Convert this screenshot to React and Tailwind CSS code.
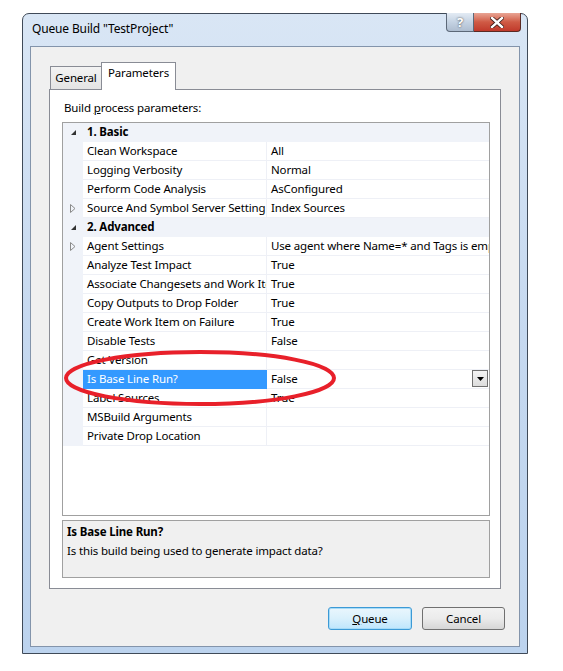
import React from 'react';

const rows = [
  { cat: true, name: '1. Basic' },
  { name: 'Clean Workspace', value: 'All' },
  { name: 'Logging Verbosity', value: 'Normal' },
  { name: 'Perform Code Analysis', value: 'AsConfigured' },
  { name: 'Source And Symbol Server Setting', value: 'Index Sources', collapsed: true },
  { cat: true, name: '2. Advanced' },
  { name: 'Agent Settings', value: 'Use agent where Name=* and Tags is empty; Max Wait Time: 04:00:00', collapsed: true },
  { name: 'Analyze Test Impact', value: 'True' },
  { name: 'Associate Changesets and Work Items', value: 'True' },
  { name: 'Copy Outputs to Drop Folder', value: 'True' },
  { name: 'Create Work Item on Failure', value: 'True' },
  { name: 'Disable Tests', value: 'False' },
  { name: 'Get Version', value: '' },
  { name: 'Is Base Line Run?', value: 'False', selected: true },
  { name: 'Label Sources', value: 'True' },
  { name: 'MSBuild Arguments', value: '' },
  { name: 'Private Drop Location', value: '' },
];

function ExpandedArrow() {
  return (
    <svg width="7" height="7" viewBox="0 0 7 7">
      <path d="M6 1 L6 6 L1 6 Z" fill="#333" />
    </svg>
  );
}

function CollapsedArrow() {
  return (
    <svg width="6" height="9" viewBox="0 0 6 9">
      <path d="M0.5 0.5 L5 4.5 L0.5 8.5 Z" fill="none" stroke="#8a8a8a" strokeWidth="1" />
    </svg>
  );
}

function GridRow({ row }) {
  if (row.cat) {
    return (
      <div className="flex h-[19px] bg-[#f0f3f9] border-b border-[#f0f3f9]">
        <div className="w-[20px] flex items-center justify-center pl-[1px]">
          <ExpandedArrow />
        </div>
        <div className="pl-[4px] font-bold leading-[18px] text-black">{row.name}</div>
      </div>
    );
  }
  return (
    <div className="flex h-[19px]">
      <div className="w-[20px] shrink-0 bg-[#f0f3f9] flex items-center justify-center">
        {row.collapsed && <CollapsedArrow />}
      </div>
      <div
        className={
          row.selected
            ? 'w-[184px] shrink-0 bg-[#3399ff] text-white pl-[4px] leading-[18px] whitespace-nowrap overflow-hidden border-b border-[#3399ff]'
            : 'w-[184px] shrink-0 pl-[4px] leading-[18px] whitespace-nowrap overflow-hidden border-b border-r border-[#eef0f6]'
        }
      >
        {row.name}
      </div>
      <div className="flex-1 min-w-0 flex border-b border-[#eef0f6]">
        <div className="flex-1 min-w-0 pl-[4px] leading-[18px] whitespace-nowrap overflow-hidden">{row.value}</div>
        {row.selected && (
          <div className="w-[16px] h-[17px] mr-[1px] border border-[#707070] bg-gradient-to-b from-[#f4f4f4] to-[#dcdcdc] flex items-center justify-center">
            <svg width="7" height="4" viewBox="0 0 7 4">
              <path d="M0 0 L7 0 L3.5 4 Z" fill="#000" />
            </svg>
          </div>
        )}
      </div>
    </div>
  );
}

export default function App() {
  return (
    <div className="relative w-[563px] h-[671px] bg-white pl-[22px] pt-[13px] font-['Segoe_UI','Noto_Sans',sans-serif] text-[11.5px] tracking-[-0.15px] text-black">
      {/* Window frame */}
      <div className="relative w-[506px] h-[641px] rounded-t-[7px] border border-[#3f4a58] bg-gradient-to-b from-[#d9e6f5] via-[#c6d9f0] to-[#bcd3ee] flex flex-col px-[7px] pb-[6px]">
        {/* Title bar */}
        <div className="h-[32px] flex items-center pl-[2px] pb-[2px] text-[12px] text-black">
          Queue Build "TestProject"
        </div>
        {/* caption buttons */}
        <div className="absolute right-[6px] top-[-1px] flex">
          <div className="w-[28px] h-[19px] rounded-bl-[4px] border border-[#5c6878] border-t-0 bg-gradient-to-b from-[#e3ebf4] via-[#c5d3e3] to-[#aebdd0] flex items-center justify-center text-white font-bold text-[13px] leading-none [text-shadow:0_0_2px_#333]">
            ?
          </div>
          <div className="w-[47px] h-[19px] rounded-br-[4px] border border-[#5a2a24] border-t-0 border-l-0 bg-gradient-to-b from-[#e8a494] via-[#cf5a45] to-[#c0392b] flex items-center justify-center">
            <svg width="14" height="11" viewBox="0 0 14 11">
              <path d="M2 1 L12 10 M12 1 L2 10" stroke="#3a1a16" strokeWidth="4" strokeLinecap="square" />
              <path d="M2 1 L12 10 M12 1 L2 10" stroke="#ffffff" strokeWidth="2.4" strokeLinecap="square" />
            </svg>
          </div>
        </div>

        {/* Client area */}
        <div className="flex-1 border border-[#8394ab] bg-[#f0f0f0] flex flex-col pl-[18px] pr-[18px] pt-[14px]">
          {/* Tabs */}
          <div className="flex items-end h-[28px] pl-[1px]">
            <div className="h-[23px] w-[52px] border border-[#898c95] border-b-0 bg-gradient-to-b from-[#f3f3f3] to-[#e4e4e4] flex items-start justify-center pt-[2px] -mr-[1px]">
              General
            </div>
            <div className="relative z-10 h-[28px] w-[75px] border border-[#898c95] border-b-0 bg-white flex items-start justify-center pt-[1px] -mb-[1px]">
              Parameters
            </div>
          </div>
          {/* Tab panel */}
          <div className="h-[500px] border border-[#898c95] bg-white flex flex-col pl-[12px] pr-[10px]">
            <div className="pt-[9px] pl-[2px] h-[32px] leading-[18px]">
              Build <span className="underline">p</span>rocess parameters:
            </div>
            {/* Property grid */}
            <div className="h-[394px] border border-[#a0a0a0] bg-white flex flex-col overflow-hidden">
              {rows.map((r, i) => (
                <GridRow key={i} row={r} />
              ))}
            </div>
            {/* Description */}
            <div className="mt-[4px] h-[58px] border border-[#a0a0a0] bg-[#f0f0f0] px-[4px] pt-[1px] leading-[19px]">
              <div className="font-bold">Is Base Line Run?</div>
              <div>Is this build being used to generate impact data?</div>
            </div>
          </div>
          {/* Buttons */}
          <div className="flex justify-end gap-[10px] pt-[18px] -mr-[4px]">
            <button className="w-[84px] h-[23px] rounded-[3px] border border-[#3c9ad6] bg-gradient-to-b from-[#eaf6fd] via-[#d9f0fc] to-[#bee6fd] shadow-[inset_0_0_0_1px_#a6dbf7]">
              <span className="underline">Q</span>ueue
            </button>
            <button className="w-[83px] h-[23px] rounded-[3px] border border-[#707070] bg-gradient-to-b from-[#f2f2f2] via-[#ebebeb] to-[#d6d6d6]">
              Cancel
            </button>
          </div>
        </div>
      </div>

      {/* Red annotation ellipse */}
      <svg className="absolute left-0 top-0 pointer-events-none" width="563" height="671" viewBox="0 0 563 671">
        <ellipse cx="200" cy="378" rx="134" ry="26" fill="none" stroke="#e8202a" strokeWidth="4" />
      </svg>
    </div>
  );
}
